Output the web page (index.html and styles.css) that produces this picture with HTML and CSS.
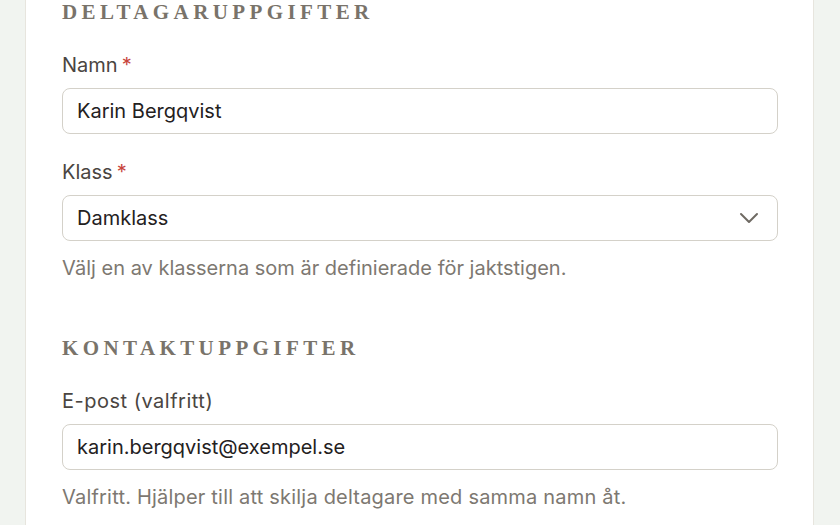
FILE: index.html
```html
<!DOCTYPE html>
<html lang="sv">
<head>
<meta charset="utf-8">
<title>Deltagaruppgifter</title>
<link rel="stylesheet" href="styles.css">
</head>
<body>
<main class="card">
  <section class="group">
    <h2 class="heading">Deltagaruppgifter</h2>
    <div class="field">
      <label class="label" for="namn">Namn<span class="req">*</span></label>
      <div class="input"><span class="value">Karin Bergqvist</span></div>
    </div>
    <div class="field">
      <label class="label" for="klass">Klass<span class="req">*</span></label>
      <div class="input select">
        <span class="value">Damklass</span>
        <svg class="chev" width="20" height="12" viewBox="0 0 20 12" aria-hidden="true"><path d="M2 2 L10 10 L18 2" fill="none" stroke="#6f6a63" stroke-width="2" stroke-linecap="round" stroke-linejoin="round"/></svg>
      </div>
      <p class="help">Välj en av klasserna som är definierade för jaktstigen.</p>
    </div>
  </section>
  <section class="group group2">
    <h2 class="heading">Kontaktuppgifter</h2>
    <div class="field">
      <label class="label label-wide" for="epost">E-post (valfritt)</label>
      <div class="input"><span class="value">karin.bergqvist@exempel.se</span></div>
      <p class="help help-wide">Valfritt. Hjälper till att skilja deltagare med samma namn åt.</p>
    </div>
  </section>
</main>
</body>
</html>
```
FILE: styles.css
```css
html, body {
  margin: 0;
  padding: 0;
  height: 100%;
  overflow: hidden;
}
body {
  background: #f1f4f0;
  font-family: Inter, "Noto Sans", sans-serif;
}
.card {
  margin-left: 25px;
  width: 789px;
  min-height: 525px;
  background: #ffffff;
  border-left: 1.5px solid #e7e5de;
  border-right: 1.5px solid #e7e5de;
  padding: 0 36px;
  box-sizing: border-box;
}
.heading {
  margin: 0;
  font-family: "Liberation Serif", "DejaVu Serif", serif;
  font-weight: 700;
  font-size: 21px;
  line-height: 24px;
  letter-spacing: 4.4px;
  text-transform: uppercase;
  color: #79736a;
}
.group2 {
  margin-top: 54px;
}
.field {
  margin-top: 27px;
}
.field + .field {
  margin-top: 24px;
}
.label {
  display: block;
  font-size: 20px;
  line-height: 28px;
  color: #4a4541;
  margin-bottom: 9px;
}
.label-wide {
  letter-spacing: 0.5px;
}
.req {
  color: #c8453d;
  margin-left: 4px;
}
.input {
  height: 46px;
  box-sizing: border-box;
  border: 1.5px solid #d4d1c9;
  border-radius: 8px;
  background: #fff;
  display: flex;
  align-items: center;
  padding: 0 14px;
  width: 716px;
}
.value {
  font-size: 20px;
  color: #24211e;
  flex: 1;
}
.chev {
  margin-right: 4px;
}
.help {
  margin: 13px 0 0;
  font-size: 20px;
  line-height: 28px;
  color: #7d7871;
}
.help-wide {
  letter-spacing: 0.2px;
}
```
